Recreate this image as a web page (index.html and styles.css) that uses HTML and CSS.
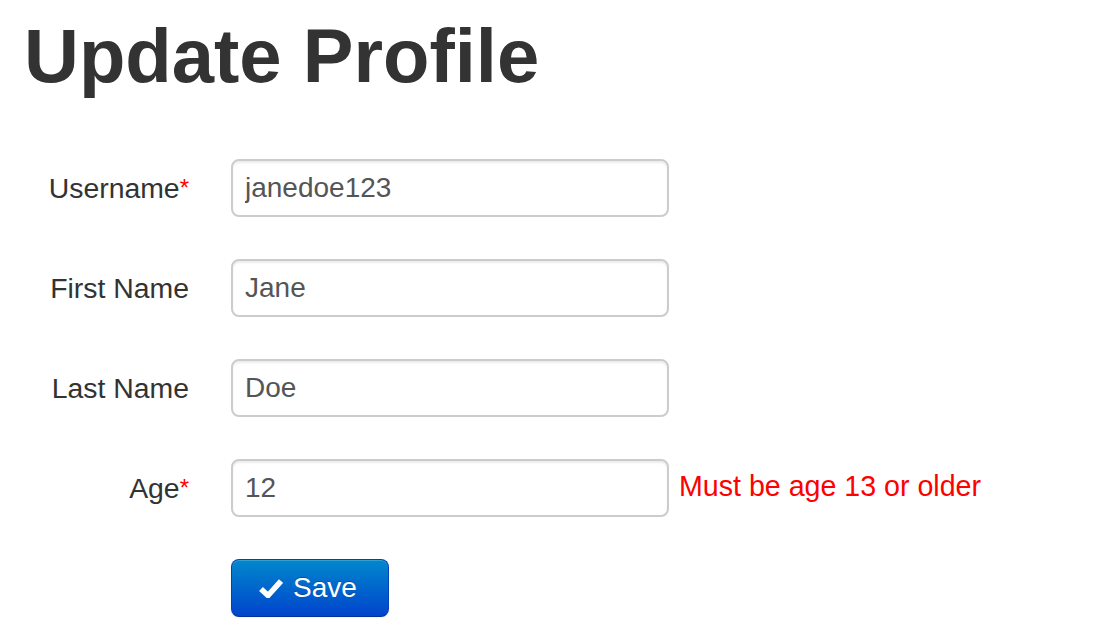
FILE: index.html
```html
<!DOCTYPE html>
<html>
<head>
<meta charset="utf-8">
<link rel="stylesheet" href="styles.css">
</head>
<body>
<div class="page">
  <h1 class="title">Update Profile</h1>
  <form class="form">
    <div class="row">
      <label class="label">Username<span class="req">*</span></label>
      <input class="field" type="text" value="janedoe123">
    </div>
    <div class="row">
      <label class="label">First Name</label>
      <input class="field" type="text" value="Jane">
    </div>
    <div class="row">
      <label class="label">Last Name</label>
      <input class="field" type="text" value="Doe">
    </div>
    <div class="row">
      <label class="label">Age<span class="req">*</span></label>
      <input class="field" type="text" value="12">
      <span class="error">Must be age 13 or older</span>
    </div>
    <div class="row">
      <span class="label"></span>
      <button class="btn" type="button">
        <svg class="check" width="24" height="20" viewBox="0 0 24 20"><path d="M2 11 L9 17.5 L22 3" fill="none" stroke="#fff" stroke-width="5.5" stroke-linecap="butt" stroke-linejoin="miter"/></svg>
        <span>Save</span>
      </button>
    </div>
  </form>
</div>
</body>
</html>
```

FILE: styles.css
```css
html, body {
  margin: 0;
  padding: 0;
  background: #fff;
}
body {
  font-family: "Liberation Sans", Arial, sans-serif;
  color: #333;
}
.page {
  padding: 12px 0 0 24px;
}
.title {
  margin: 0 0 59px 0;
  font-size: 76px;
  line-height: 88px;
  font-weight: bold;
  color: #333;
}
.form {
  margin: 0;
}
.row {
  display: flex;
  align-items: center;
  height: 58px;
  margin-bottom: 42px;
}
.label {
  width: 165px;
  margin-right: 42px;
  text-align: right;
  font-size: 28.4px;
  color: #333;
  flex: none;
}
.req {
  color: #f00;
  font-size: 24px;
  vertical-align: 2px;
}
.field {
  box-sizing: border-box;
  width: 438px;
  height: 58px;
  padding: 0 12px;
  border: 2px solid #ccc;
  border-radius: 8px;
  box-shadow: inset 0 2px 2px rgba(0,0,0,0.075);
  font-family: "Liberation Sans", Arial, sans-serif;
  font-size: 28px;
  color: #555;
  background: #fff;
  outline: none;
  flex: none;
}
.error {
  margin-left: 10px;
  font-size: 28.6px;
  color: #f00;
  position: relative;
  top: -2px;
}
.btn {
  box-sizing: border-box;
  display: inline-flex;
  align-items: center;
  width: 158px;
  height: 58px;
  padding: 0 0 0 27px;
  gap: 10px;
  border: 1px solid #0040b8;
  border-bottom-color: #003399;
  border-radius: 8px;
  background: linear-gradient(to bottom, #0088cc, #0044cc);
  color: #fff;
  font-family: "Liberation Sans", Arial, sans-serif;
  font-size: 28px;
  text-shadow: 0 -1px 0 rgba(0,0,0,0.25);
  box-shadow: inset 0 1px 0 rgba(255,255,255,0.2), 0 1px 2px rgba(0,0,0,0.05);
  cursor: pointer;
}
.check {
  flex: none;
}
```
